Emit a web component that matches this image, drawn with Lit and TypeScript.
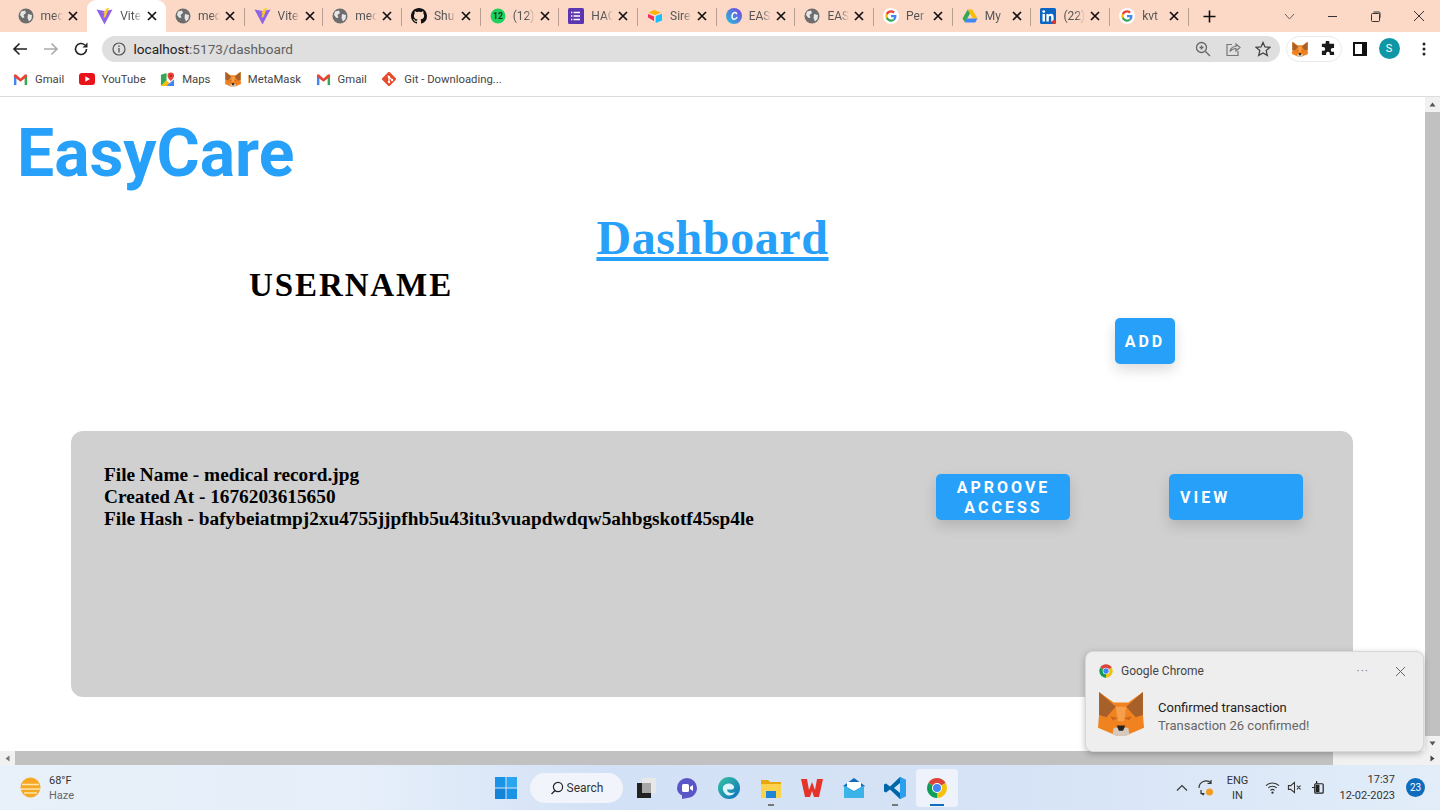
import { LitElement, html, css, svg } from 'lit';
import { customElement } from 'lit/decorators.js';

const icon = (size: number, box: string, body: unknown) =>
  html`<svg width=${size} height=${size} viewBox=${box}>${body}</svg>`;

const chrome = (size: number) =>
  icon(size, '0 0 48 48', svg`
    <path fill="#db4437" d="M24 24L6.68 14A20 20 0 0 1 41.32 14Z"/>
    <path fill="#f4c20d" d="M24 24L41.32 14A20 20 0 0 1 24 44Z"/>
    <path fill="#0f9d58" d="M24 24L24 44A20 20 0 0 1 6.68 14Z"/>
    <circle cx="24" cy="24" r="10" fill="#fff"/>
    <circle cx="24" cy="24" r="8" fill="#4285f4"/>`);

const fox = (size: number) =>
  icon(size, '0 0 44 44', svg`
    <path fill="#f0821f" d="M1 2L15 12H29L43 2V24L44 36L30 42L26 44H18L14 42L0 36L1 24Z"/>
    <path fill="#a8602a" d="M1 2L17 16L8 26L1 24Z"/>
    <path fill="#a8602a" d="M43 2L27 16L36 26L43 24Z"/>
    <path fill="#f6a04c" d="M17 16H27L25 30H19Z"/>
    <path fill="#c9661c" d="M12 25L19 27L14 29Z"/>
    <path fill="#c9661c" d="M32 25L25 27L30 29Z"/>
    <path fill="#d7c9bb" d="M15 36H29L30 42L26 44H18L14 42Z"/>
    <path fill="#222" d="M18 34H26L24 39H20Z"/>`);

const globe = icon(16, '0 0 16 16', svg`
  <circle cx="8" cy="8" r="7.5" fill="#6d6d6d"/>
  <path fill="#e6e6e6" d="M3 3.5L7 2.5L8 5L5.5 7L6.5 9.5L4.5 10L2 7ZM10 6L14 7L13.5 11L11 13.5L9.5 10Z"/>`);

const vite = icon(17, '0 0 17 17', svg`
  <path fill="#8f63e8" d="M0.5 1.5L8.5 3L16.5 1.5L8.5 16.5Z"/>
  <path fill="#ffc928" d="M10.5 0.5L13 0L9.5 9L7.5 10L8.5 5L7 5.2Z"/>`);

const github = icon(16, '0 0 16 16', svg`<path fill="#111" d="M8 0C3.58 0 0 3.58 0 8c0 3.54 2.29 6.53 5.47 7.59.4.07.55-.17.55-.38 0-.19-.01-.82-.01-1.49-2.01.37-2.53-.49-2.69-.94-.09-.23-.48-.94-.82-1.13-.28-.15-.68-.52-.01-.53.63-.01 1.08.58 1.23.82.72 1.21 1.87.87 2.33.66.07-.52.28-.87.51-1.07-1.78-.2-3.64-.89-3.64-3.95 0-.87.31-1.59.82-2.15-.08-.2-.36-1.02.08-2.12 0 0 .67-.21 2.2.82.64-.18 1.32-.27 2-.27.68 0 1.36.09 2 .27 1.53-1.04 2.2-.82 2.2-.82.44 1.1.16 1.92.08 2.12.51.56.82 1.27.82 2.15 0 3.07-1.87 3.75-3.65 3.95.29.25.54.73.54 1.48 0 1.07-.01 1.93-.01 2.2 0 .21.15.46.55.38A8.013 8.013 0 0016 8c0-4.42-3.58-8-8-8z"/>`);

const whatsapp = icon(16, '0 0 16 16', svg`
  <circle cx="8" cy="8" r="7.5" fill="#1fd05f"/>
  <text x="8" y="11" font-size="8.5" font-weight="700" text-anchor="middle" fill="#0b3d1e" font-family="Roboto">12</text>`);

const formsIcon = icon(16, '0 0 16 16', svg`
  <rect width="16" height="16" rx="1.5" fill="#5c35b0"/>
  <path stroke="#fff" stroke-width="1.4" d="M5.5 4.5H12M5.5 8H12M5.5 11.5H12M3 4.5H4.3M3 8H4.3M3 11.5H4.3"/>`);

const airtable = icon(16, '0 0 16 16', svg`
  <path fill="#fcb400" d="M7 2L14 4.5L8 7L1.5 4.5Z"/>
  <path fill="#18bfff" d="M8.7 8L15 5.8V12.5L8.7 15Z"/>
  <path fill="#f82b60" d="M1 6L7 8.5V13L1 9.5Z"/>`);

const canva = icon(16, '0 0 16 16', svg`
  <defs><linearGradient id="cv" x1="0" y1="1" x2="1" y2="0"><stop offset="0" stop-color="#22c4d6"/><stop offset="1" stop-color="#7b3fe4"/></linearGradient></defs>
  <circle cx="8" cy="8" r="8" fill="url(#cv)"/>
  <path fill="none" stroke="#fff" stroke-width="1.5" stroke-linecap="round" d="M10.6 5.6C9.8 4 7.4 4.2 6.4 6.4C5.4 8.8 6.2 11.4 8.2 11.2C9.4 11.1 10.2 10.4 10.8 9.6"/>`);

const googleG = icon(16, '0 0 48 48', svg`
  <circle cx="24" cy="24" r="24" fill="#fff"/>
  <g transform="translate(7 7) scale(.71)">
  <path fill="#EA4335" d="M24 9.5c3.54 0 6.71 1.22 9.21 3.6l6.85-6.85C35.9 2.38 30.47 0 24 0 14.62 0 6.51 5.38 2.56 13.22l7.98 6.19C12.43 13.72 17.74 9.5 24 9.5z"/>
  <path fill="#4285F4" d="M46.98 24.55c0-1.57-.15-3.09-.38-4.55H24v9.02h12.94c-.58 2.96-2.26 5.48-4.78 7.18l7.73 6c4.51-4.18 7.09-10.36 7.09-17.65z"/>
  <path fill="#FBBC05" d="M10.53 28.59c-.48-1.45-.76-2.99-.76-4.59s.27-3.14.76-4.59l-7.98-6.19C.92 16.46 0 20.12 0 24c0 3.88.92 7.54 2.56 10.78l7.97-6.19z"/>
  <path fill="#34A853" d="M24 48c6.48 0 11.93-2.13 15.89-5.81l-7.73-6c-2.15 1.45-4.92 2.3-8.16 2.3-6.26 0-11.57-4.22-13.47-9.91l-7.98 6.19C6.51 42.62 14.62 48 24 48z"/>
  </g>`);

const drive = icon(16, '0 0 16 16', svg`
  <path fill="#fbbc04" d="M5.7 1.5H10.3L15.5 10.5H10.9Z"/>
  <path fill="#34a853" d="M5.7 1.5L8 5.5L3 14.5L0.5 10.5Z"/>
  <path fill="#4285f4" d="M4.8 10.5H15.5L13.2 14.5H3Z"/>`);

const linkedin = icon(16, '0 0 16 16', svg`
  <rect width="16" height="16" rx="1.5" fill="#0a66c2"/>
  <rect x="2.5" y="6" width="2.4" height="7.5" fill="#fff"/><circle cx="3.7" cy="3.6" r="1.4" fill="#fff"/>
  <path fill="#fff" d="M6.4 6H8.7V7C9.2 6.2 10 5.8 11 5.8C12.8 5.8 13.6 7 13.6 9V13.5H11.2V9.5C11.2 8.5 10.9 8 10.1 8C9.3 8 8.8 8.6 8.8 9.5V13.5H6.4Z"/>
  <circle cx="14" cy="14" r="2" fill="#e0352b"/>`);

const gmail = icon(15, '0 0 16 16', svg`
  <path fill="#4285f4" d="M1 3.5H3.6V14H1Z"/>
  <path fill="#34a853" d="M12.4 3.5H15V14H12.4Z"/>
  <path fill="#ea4335" d="M1 3L3 2.5L8 7L13 2.5L15 3V5L8 10.5L1 5Z"/>`);

const youtube = icon(16, '0 0 16 16', svg`
  <rect y="2" width="16" height="12" rx="3" fill="#e8141a"/>
  <path fill="#fff" d="M6.3 5.3L11 8L6.3 10.7Z"/>`);

const maps = icon(15, '0 0 16 16', svg`
  <path fill="#34a853" d="M1 3L7 1V9L1 15Z"/>
  <path fill="#fbbc04" d="M7 9L10 12L7 15H1Z"/>
  <path fill="#4285f4" d="M10 12L15 8V15H7Z"/>
  <path fill="#ea4335" d="M11.5 0.5A3.5 3.5 0 0 1 15 4C15 6.5 11.5 9.5 11.5 9.5S8 6.5 8 4A3.5 3.5 0 0 1 11.5 .5Z"/>
  <circle cx="11.5" cy="4" r="1.2" fill="#a52714"/>`);

const git = icon(16, '0 0 16 16', svg`
  <rect x="2.6" y="2.6" width="10.8" height="10.8" transform="rotate(45 8 8)" rx="1.2" fill="#e64a2a"/>
  <path stroke="#fff" stroke-width="1.2" fill="none" d="M6.6 4.6L11 9M8 6V11"/>
  <circle cx="8" cy="6" r="1.2" fill="#fff"/><circle cx="8" cy="11" r="1.2" fill="#fff"/><circle cx="11" cy="9" r="1.2" fill="#fff"/>`);

const tabs = [
  { icon: globe, title: 'mec' },
  { icon: vite, title: 'Vite', active: true },
  { icon: globe, title: 'mec' },
  { icon: vite, title: 'Vite' },
  { icon: globe, title: 'mec' },
  { icon: github, title: 'Shu' },
  { icon: whatsapp, title: '(12)' },
  { icon: formsIcon, title: 'HAC' },
  { icon: airtable, title: 'Sire' },
  { icon: canva, title: 'EAS' },
  { icon: globe, title: 'EAS' },
  { icon: googleG, title: 'Per' },
  { icon: drive, title: 'My' },
  { icon: linkedin, title: '(22)' },
  { icon: googleG, title: 'kvt' },
];

const bookmarks = [
  { icon: gmail, label: 'Gmail' },
  { icon: youtube, label: 'YouTube' },
  { icon: maps, label: 'Maps' },
  { icon: fox(16), label: 'MetaMask' },
  { icon: gmail, label: 'Gmail' },
  { icon: git, label: 'Git - Downloading...' },
];

const dock = [
  icon(24, '0 0 24 24', svg`
    <rect x="8" y="2" width="14" height="15" fill="#e8e8e8"/>
    <rect x="3" y="7" width="14" height="15" fill="#222"/>
    <rect x="8" y="7" width="9" height="10" fill="#a8a8a8"/>`),
  icon(24, '0 0 24 24', svg`
    <path fill="#5b56c8" d="M12 2A10 10 0 0 1 22 12C22 18 17 22 12 22L7 23V19.5C3.5 17.5 2 15 2 12A10 10 0 0 1 12 2Z"/>
    <rect x="7" y="8" width="7" height="8" rx="1.5" fill="#fff"/><path fill="#fff" d="M15 11L18 9V15L15 13Z"/>`),
  icon(24, '0 0 24 24', svg`
    <defs><linearGradient id="ed" x1="0" y1="0" x2="1" y2="1"><stop offset="0" stop-color="#37c5a0"/><stop offset="1" stop-color="#0c6fc0"/></linearGradient></defs>
    <circle cx="12" cy="12" r="11" fill="url(#ed)"/>
    <path fill="#dff4fb" d="M6 11C7 7.5 13 6 16 9C17.5 10.5 17.5 13 15 13.5H10C10 16.5 14 18 18 16C16 20 11 20.5 8.5 18C6 16 5.5 13 6 11Z"/>`),
  icon(24, '0 0 24 24', svg`
    <path fill="#e8a80c" d="M2 4H9L11 6H22V11H2Z"/>
    <rect x="2" y="8" width="20" height="14" rx="1" fill="#fbd34c"/>
    <rect x="7" y="15" width="10" height="7" fill="#1f86d6"/>`),
  icon(24, '0 0 24 24', svg`
    <path fill="#e5332a" d="M1 3H7L9 14L12 6L15 14L17 3H23L19 21H14L12 15L10 21H5Z"/>`),
  icon(24, '0 0 24 24', svg`
    <path fill="#0f6cbd" d="M12 2L23 10L12 17L1 10Z"/>
    <rect x="2" y="10" width="20" height="12" fill="#2aa0dc"/>
    <path fill="#fff" d="M5 6H19V11L12 15L5 11Z"/>
    <path fill="#3db4e8" d="M2 10L12 16L22 10V22H2Z"/>`),
  icon(24, '0 0 24 24', svg`
    <path fill="#0065a9" d="M17 1L23 4V20L17 23L7 13.5L3 16.5L1 15.5V8.5L3 7.5L7 10.5ZM17 7L11 12L17 17Z"/>
    <path fill="#2ba0ee" d="M17 1L23 4V20L17 23Z"/>`),
];

@customElement('app-root')
export class AppRoot extends LitElement {
  static styles = css`
    :host {
      display: flex;
      flex-direction: column;
      width: 1440px;
      height: 810px;
      position: relative;
      overflow: hidden;
      background: #fff;
      font-family: Roboto, 'Noto Sans', sans-serif;
      color: #222;
    }
    svg { display: block; flex: none; }

    .tabbar {
      height: 32px;
      flex: none;
      display: flex;
      align-items: stretch;
      padding-left: 8.5px;
      background: #fcd9c6;
    }
    .tab {
      width: 78.7px;
      flex: none;
      display: flex;
      align-items: center;
      padding-left: 9px;
      box-sizing: border-box;
      position: relative;
    }
    .tab.active { background: #fff; border-radius: 9px 9px 0 0; }
    .tab.sep::after {
      content: '';
      position: absolute;
      right: 0;
      top: 8px;
      height: 18px;
      width: 1px;
      background: #b99f92;
    }
    .tab-title {
      width: 22px;
      margin-left: 7px;
      font-size: 12px;
      color: #555;
      white-space: nowrap;
      -webkit-mask-image: linear-gradient(90deg, #000 60%, transparent);
      mask-image: linear-gradient(90deg, #000 60%, transparent);
    }
    .tab-close { margin-left: 5px; }
    .plus { margin-left: 14px; align-self: center; }
    .winctl { margin-left: auto; display: flex; align-items: center; }
    .winctl > div { width: 43px; display: flex; justify-content: center; }

    .toolbar {
      height: 33px;
      flex: none;
      display: flex;
      align-items: center;
      background: #fff;
      padding-left: 12px;
    }
    .nav { width: 30.5px; flex: none; }
    .urlbar {
      margin-left: -2px;
      width: 1178px;
      height: 26px;
      flex: none;
      display: flex;
      align-items: center;
      box-sizing: border-box;
      padding: 0 9px 0 10px;
      border-radius: 13px;
      background: #dfdfdf;
    }
    .url { margin-left: 8px; font-size: 13.6px; color: #5f5f5f; flex: 1; }
    .url b { font-weight: 400; color: #222; }
    .url-tools { display: flex; gap: 14px; align-items: center; }
    .extensions {
      margin-left: 6px;
      height: 26px;
      width: 56px;
      flex: none;
      display: flex;
      align-items: center;
      justify-content: space-around;
      border: 1px solid #eaeaea;
      border-radius: 13px;
      box-sizing: border-box;
    }
    .panel { margin-left: 11px; }
    .avatar {
      margin-left: 12px;
      width: 21px;
      height: 21px;
      border-radius: 50%;
      background: #0f97a6;
      color: #fff;
      font-size: 11px;
      display: flex;
      align-items: center;
      justify-content: center;
    }
    .kebab { margin-left: 17px; }

    .bookmarks {
      height: 32px;
      flex: none;
      display: flex;
      align-items: center;
      gap: 14.5px;
      padding: 0 0 3px 13px;
      border-bottom: 1px solid #dcdcdc;
      box-sizing: border-box;
    }
    .bookmark { display: flex; align-items: center; gap: 7px; font-size: 11.3px; color: #444; }

    .viewport { flex: 1; min-height: 0; display: flex; }
    .page { flex: 1; min-width: 0; }
    .vscroll {
      width: 15px;
      flex: none;
      background: #f1f1f1;
      display: flex;
      flex-direction: column;
    }
    .arrow { height: 15px; display: flex; align-items: center; justify-content: center; flex: none; }
    .vthumb { flex: 1; background: #c1c1c1; }
    .hscroll { height: 14px; flex: none; display: flex; background: #f1f1f1; }
    .hscroll .arrow { width: 15px; height: auto; }
    .hthumb { width: 1318px; background: #c1c1c1; }
    .hrest { flex: 1; }

    .logo {
      margin: 0;
      padding: 17px 0 0 17px;
      font: 700 66px/80px Roboto, sans-serif;
      color: #26a0f8;
    }
    .title {
      margin: 20px 0 0;
      text-align: center;
      font: 700 48px/48px 'Liberation Serif', serif;
      letter-spacing: 0.6px;
      color: #26a0f8;
      text-decoration: underline;
    }
    .user-row {
      display: flex;
      justify-content: space-between;
      align-items: flex-start;
      padding: 3px 250px 0 249px;
    }
    .username {
      font: 700 33px/40px 'Liberation Serif', serif;
      letter-spacing: 1.9px;
      color: #000;
    }
    .btn {
      display: block;
      border: 0;
      padding: 2px 10px 0 11px;
      box-sizing: border-box;
      height: 46px;
      border-radius: 5px;
      background: #26a0f8;
      color: #fff;
      font: 700 16px/20px Roboto, sans-serif;
      letter-spacing: 3px;
      text-transform: uppercase;
      box-shadow: 0 6px 14px rgba(0, 0, 0, 0.14);
    }
    .user-row .btn { margin-top: 53px; width: 60px; padding: 2px 0 0; }
    .card {
      margin: 67px 72px 0 71px;
      height: 266px;
      box-sizing: border-box;
      padding: 33px 50px 0 33px;
      display: flex;
      align-items: flex-start;
      border-radius: 12px;
      background: #d0d0d0;
    }
    .info {
      flex: 1;
      font: 700 19.3px/22px 'Liberation Serif', serif;
      color: #000;
    }
    .actions { display: flex; gap: 99px; margin-top: 10px; }
    .actions .btn { width: 134px; }
    .actions .left { text-align: left; }

    .taskbar {
      height: 45px;
      flex: none;
      display: flex;
      align-items: center;
      background: linear-gradient(90deg, #e8f0f9 0%, #e6effa 25%, #d3e1f6 42%, #d6e3f6 70%, #e2edf9 100%);
    }
    .weather { display: flex; align-items: center; gap: 8px; padding-left: 20px; width: 495px; box-sizing: border-box; flex: none; }
    .weather-text { font-size: 11px; line-height: 15px; color: #333; }
    .weather-text div + div { color: #666; }
    .search {
      margin-left: 13px;
      width: 93px;
      height: 30px;
      border-radius: 15px;
      background: #f1f5fb;
      display: flex;
      align-items: center;
      justify-content: center;
      gap: 3px;
      font-size: 12px;
      color: #333;
    }
    .dock { display: flex; margin-left: 2px; }
    .dock-item {
      width: 41.6px;
      height: 38px;
      display: flex;
      justify-content: center;
      align-items: center;
      position: relative;
    }
    .dock-item.active { background: #edf2fb; border-radius: 4px; }
    .dock-item.open::after {
      content: '';
      position: absolute;
      left: 50%;
      bottom: 1px;
      margin-left: -3px;
      width: 6px;
      height: 2px;
      background: #777;
    }
    .dock-item.active::after {
      content: '';
      position: absolute;
      left: 50%;
      bottom: 1px;
      margin-left: -7px;
      width: 14px;
      height: 2px;
      background: #0f6cbd;
    }
    .tray { margin-left: auto; display: flex; align-items: center; padding-right: 15px; color: #333; }
    .tray-gap-sm { width: 7px; }
    .tray-gap-md { width: 9px; }
    .lang { font-size: 11px; line-height: 15px; text-align: center; width: 30px; margin: 0 13px 0 7px; }
    .clock { font-size: 11px; line-height: 16px; text-align: right; margin-left: 13px; }
    .badge {
      margin-left: 11px;
      width: 19px;
      height: 19px;
      border-radius: 50%;
      background: #0f6cbd;
      color: #fff;
      font-size: 10px;
      display: flex;
      align-items: center;
      justify-content: center;
    }

    .toast {
      position: absolute;
      left: 1085px;
      top: 651px;
      width: 339px;
      height: 101px;
      box-sizing: border-box;
      padding: 11px 17px 0 12px;
      border-radius: 8px;
      background: #eeeeee;
      border: 1px solid #d8d8d8;
      box-shadow: 0 2px 6px rgba(0, 0, 0, 0.25);
    }
    .toast-head { display: flex; align-items: center; gap: 7px; font-size: 12px; color: #444; }
    .toast-tools { margin-left: auto; display: flex; align-items: center; gap: 26px; }
    .dots { color: #888; font-size: 12px; letter-spacing: 1px; line-height: 10px; }
    .toast-body { display: flex; align-items: center; gap: 14px; margin-top: 11px; }
    .toast-text { margin-top: 8px; }
    .toast-title { font-size: 13px; line-height: 18px; color: #222; }
    .toast-msg { font-size: 13px; line-height: 18px; color: #666; }
  `;

  render() {
    const close = icon(10, '0 0 10 10', svg`<path stroke="#111" stroke-width="1.7" d="M1 1L9 9M9 1L1 9"/>`);
    return html`
      <div class="tabbar">
        ${tabs.map((t, i) => html`
          <div class="tab ${t.active ? 'active' : ''} ${!t.active && i !== 0 ? 'sep' : ''}">
            ${t.icon}
            <div class="tab-title">${t.title}</div>
            <div class="tab-close">${close}</div>
          </div>`)}
        <div class="plus">${icon(13, '0 0 13 13', svg`<path stroke="#111" stroke-width="1.6" d="M6.5 0.5V12.5M0.5 6.5H12.5"/>`)}</div>
        <div class="winctl">
          <div>${icon(11, '0 0 11 11', svg`<path fill="none" stroke="#666" d="M1 3L5.5 8L10 3"/>`)}</div>
          <div>${icon(11, '0 0 11 11', svg`<path stroke="#333" d="M1 5.5H10"/>`)}</div>
          <div>${icon(11, '0 0 11 11', svg`<rect x="1.5" y="2.5" width="8" height="8" rx="1" fill="none" stroke="#333"/><path fill="none" stroke="#333" d="M3.5 1H9a1 1 0 0 1 1 1V7"/>`)}</div>
          <div>${icon(12, '0 0 12 12', svg`<path stroke="#333" d="M1 1L11 11M11 1L1 11"/>`)}</div>
        </div>
      </div>

      <div class="toolbar">
        <div class="nav">${icon(16, '0 0 16 16', svg`<path fill="none" stroke="#222" stroke-width="1.6" d="M15 8H2M7.5 2.5L2 8L7.5 13.5"/>`)}</div>
        <div class="nav">${icon(16, '0 0 16 16', svg`<path fill="none" stroke="#aaa" stroke-width="1.6" d="M1 8H14M8.5 2.5L14 8L8.5 13.5"/>`)}</div>
        <div class="nav">${icon(16, '0 0 16 16', svg`<path fill="none" stroke="#222" stroke-width="1.6" d="M13.5 8A5.5 5.5 0 1 1 11.8 4"/><path fill="#222" d="M14.5 1.5V6.5H9.5Z"/>`)}</div>
        <div class="urlbar">
          ${icon(14, '0 0 14 14', svg`<circle cx="7" cy="7" r="6" fill="none" stroke="#555" stroke-width="1.2"/><path stroke="#555" stroke-width="1.3" d="M7 6V10.5M7 3.5V5"/>`)}
          <div class="url"><b>localhost</b>:5173/dashboard</div>
          <div class="url-tools">
            ${icon(16, '0 0 16 16', svg`<circle cx="6.5" cy="6.5" r="5" fill="none" stroke="#666" stroke-width="1.3"/><path stroke="#666" stroke-width="1.4" d="M10.5 10.5L15 15M4.5 6.5H8.5M6.5 4.5V8.5"/>`)}
            ${icon(16, '0 0 16 16', svg`<path fill="none" stroke="#777" stroke-width="1.2" d="M7 3.5H2V14.5H13V10M5 10.5C5.5 7 8 5.5 11 5.5V3L15 6.5L11 10V7.5C8.5 7.5 6.5 8.5 5 10.5Z"/>`)}
            ${icon(16, '0 0 16 16', svg`<path fill="none" stroke="#444" stroke-width="1.3" d="M8 1.5L10 6L14.8 6.4L11.2 9.6L12.3 14.4L8 11.9L3.7 14.4L4.8 9.6L1.2 6.4L6 6Z"/>`)}
          </div>
        </div>
        <div class="extensions">
          ${fox(16)}
          ${icon(15, '0 0 16 16', svg`<path fill="#1a1a1a" d="M6 1.5A2 2 0 0 1 10 1.5V3H15V7.5H13.5A2 2 0 0 0 13.5 11.5H15V15H10.5V13.5A2 2 0 0 0 6.5 13.5V15H2V10.5H3.5A2 2 0 0 0 3.5 6.5H2V3H6Z"/>`)}
        </div>
        <div class="panel">${icon(14, '0 0 14 14', svg`<rect x="1" y="1" width="12" height="12" fill="none" stroke="#111" stroke-width="2"/><rect x="9" y="1" width="4" height="12" fill="#111"/>`)}</div>
        <div class="avatar">S</div>
        <div class="kebab">${icon(14, '0 0 14 14', svg`<circle cx="7" cy="2" r="1.5" fill="#222"/><circle cx="7" cy="7" r="1.5" fill="#222"/><circle cx="7" cy="12" r="1.5" fill="#222"/>`)}</div>
      </div>

      <div class="bookmarks">
        ${bookmarks.map(b => html`<div class="bookmark">${b.icon}<span>${b.label}</span></div>`)}
      </div>

      <div class="viewport">
        <div class="page">
          <h1 class="logo">EasyCare</h1>
          <h2 class="title">Dashboard</h2>
          <div class="user-row">
            <div class="username">USERNAME</div>
            <button class="btn">Add</button>
          </div>
          <div class="card">
            <div class="info">
              <div>File Name - medical record.jpg</div>
              <div>Created At - 1676203615650</div>
              <div>File Hash - bafybeiatmpj2xu4755jjpfhb5u43itu3vuapdwdqw5ahbgskotf45sp4le</div>
            </div>
            <div class="actions">
              <button class="btn">Aproove Access</button>
              <button class="btn left">View</button>
            </div>
          </div>
        </div>
        <div class="vscroll">
          <div class="arrow">${icon(7, '0 0 7 7', svg`<path fill="#555" d="M3.5 1.5L6.5 5.5H.5Z"/>`)}</div>
          <div class="vthumb"></div>
          <div class="arrow">${icon(7, '0 0 7 7', svg`<path fill="#555" d="M3.5 5.5L6.5 1.5H.5Z"/>`)}</div>
        </div>
      </div>
      <div class="hscroll">
        <div class="arrow">${icon(7, '0 0 7 7', svg`<path fill="#777" d="M1.5 3.5L5.5 .5V6.5Z"/>`)}</div>
        <div class="hthumb"></div>
        <div class="hrest"></div>
        <div class="arrow">${icon(7, '0 0 7 7', svg`<path fill="#444" d="M5.5 3.5L1.5 .5V6.5Z"/>`)}</div>
      </div>

      <div class="taskbar">
        <div class="weather">
          ${icon(21, '0 0 21 21', svg`
            <circle cx="10.5" cy="10.5" r="10" fill="#f7a823"/>
            <path stroke="#fde6b0" stroke-width="1.6" d="M2 7.5H19M1 12H20M4 16H17"/>`)}
          <div class="weather-text"><div>68°F</div><div>Haze</div></div>
        </div>
        ${icon(22, '0 0 22 22', svg`
          <rect width="10.5" height="10.5" fill="#1b93e6"/><rect x="11.5" width="10.5" height="10.5" fill="#2aa5ef"/>
          <rect y="11.5" width="10.5" height="10.5" fill="#1583d8"/><rect x="11.5" y="11.5" width="10.5" height="10.5" fill="#1b93e6"/>`)}
        <div class="search">
          ${icon(14, '0 0 14 14', svg`<circle cx="8" cy="6" r="4.6" fill="none" stroke="#222" stroke-width="1.2"/><path stroke="#222" stroke-width="1.3" d="M5 9.5L1.5 13"/>`)}
          Search
        </div>
        <div class="dock">
          ${dock.map((d, i) => html`<div class="dock-item ${i === 3 || i === 6 ? 'open' : ''}">${d}</div>`)}
          <div class="dock-item active">${chrome(24)}</div>
        </div>
        <div class="tray">
          ${icon(12, '0 0 12 12', svg`<path fill="none" stroke="#333" stroke-width="1.1" d="M1 8.5L6 3.5L11 8.5"/>`)}
          <span class="tray-gap-md"></span>
          ${icon(18, '0 0 18 18', svg`<path fill="none" stroke="#333" stroke-width="1.2" d="M2 9A7 7 0 0 1 14 4M14 1V4.5H10.5M4 14A7 7 0 0 0 7 16M4 11V14.5H7.5"/><circle cx="12.5" cy="13" r="3.5" fill="#f39c1f"/>`)}
          <div class="lang"><div>ENG</div><div>IN</div></div>
          ${icon(15, '0 0 16 16', svg`<path fill="none" stroke="#333" stroke-width="1.1" d="M1 6A10 10 0 0 1 15 6M3.5 8.5A6.5 6.5 0 0 1 12.5 8.5M5.8 11A3.2 3.2 0 0 1 10.2 11"/><circle cx="8" cy="13.5" r="1.2" fill="#333"/>`)}
          <span class="tray-gap-sm"></span>
          ${icon(15, '0 0 16 16', svg`<path fill="none" stroke="#333" stroke-width="1.1" d="M1.5 6V10H4L8 13.5V2.5L4 6ZM10.5 6L14.5 10M14.5 6L10.5 10"/>`)}
          <span class="tray-gap-md"></span>
          ${icon(15, '0 0 16 16', svg`<rect x="4" y="4" width="9" height="10" rx="1" fill="none" stroke="#222" stroke-width="1.3"/><rect x="5" y="5" width="4" height="8" fill="#222"/><path stroke="#222" stroke-width="1.3" d="M1 8H4M6 1V4"/>`)}
          <div class="clock"><div>17:37</div><div>12-02-2023</div></div>
          <div class="badge">23</div>
        </div>
      </div>

      <div class="toast">
        <div class="toast-head">
          ${chrome(16)}
          <span>Google Chrome</span>
          <div class="toast-tools">
            <span class="dots">···</span>
            ${icon(11, '0 0 11 11', svg`<path stroke="#666" d="M1 1L10 10M10 1L1 10"/>`)}
          </div>
        </div>
        <div class="toast-body">
          ${fox(46)}
          <div class="toast-text">
            <div class="toast-title">Confirmed transaction</div>
            <div class="toast-msg">Transaction 26 confirmed!</div>
          </div>
        </div>
      </div>
    `;
  }
}
